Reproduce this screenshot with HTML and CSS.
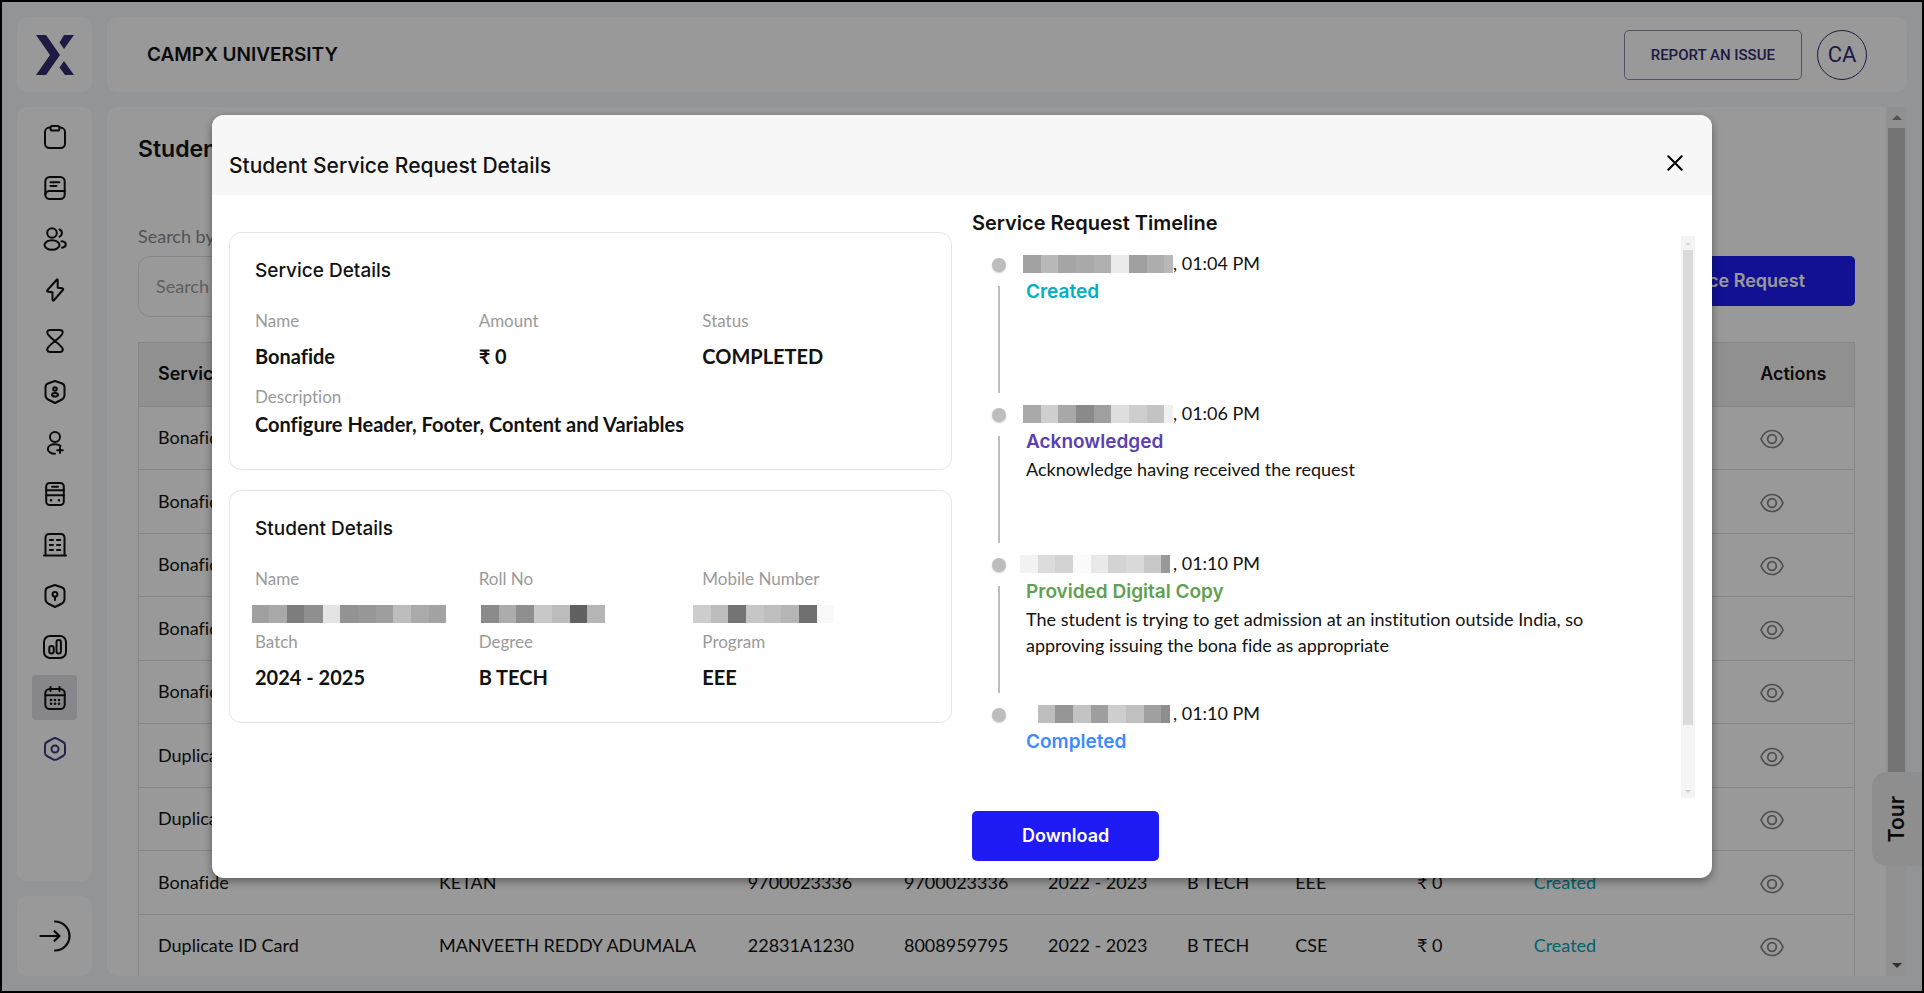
FILE: index.html
```html
<!DOCTYPE html>
<html lang="en">
<head>
<meta charset="utf-8">
<title>CampX University</title>
<link rel="stylesheet" href="styles.css">
</head>
<body>
<svg class="defs" aria-hidden="true">
  <symbol id="eye" viewBox="0 0 24 20"><path d="M1 10C3.200 4.500 7.200 1.500 12 1.500S20.800 4.500 23 10C20.800 15.500 16.800 18.500 12 18.500S3.200 15.500 1 10Z"/><circle cx="12" cy="10" r="4.300"/></symbol>
</svg>
<div class="app">
  <aside class="rail">
    <a class="card logo" href="#" aria-label="CampX home">
      <svg viewBox="0 0 38 40"><path d="M0 0H10L24 20L10 40H0L14 20ZM28 0H38L28 14L23.500 7.500ZM28 26L38 40H29L23.500 32.500Z"/></svg>
    </a>
    <nav class="card nav" aria-label="Main">
      <a href="#" aria-label="Admissions"><svg viewBox="0 0 24 24"><path d="M7.500 2.600H6.500A4.500 4.500 0 0 0 2 7V18.500A4.500 4.500 0 0 0 6.500 23H17.500A4.500 4.500 0 0 0 22 18.500V7A4.500 4.500 0 0 0 17.500 2.600H16.500"/><rect x="7.500" y="1" width="9" height="4.500" rx="1.800"/></svg></a>
      <a href="#" aria-label="Courses"><svg viewBox="0 0 24 24"><rect x="2.300" y="1" width="19.400" height="22" rx="4.500"/><path d="M2.300 18.500A4 4 0 0 1 6 15H21.700M7.500 6.300H16.500M7.500 10H13.500"/></svg></a>
      <a href="#" aria-label="People"><svg viewBox="0 0 24 24"><circle cx="9" cy="6" r="4.800"/><ellipse cx="9" cy="18" rx="7.500" ry="4.800"/><path d="M16.500 2.500A3.900 3.900 0 0 1 16.500 9.700M18.500 14.300C21 14.600 22.800 15.900 22.800 17.500S21 20.300 19 20.800"/></svg></a>
      <a href="#" aria-label="Activity"><svg viewBox="0 0 24 24"><path d="M14 1.500L4.500 12Q3.500 13.500 5 13.700L9.500 14.200V21.500Q9.700 23.500 11.200 22L19.800 12Q20.800 10.500 19.200 10.200L14.700 9.700V2.500Q14.700 .8 14 1.500Z"/></svg></a>
      <a href="#" aria-label="Schedule"><svg viewBox="0 0 24 24"><path d="M7 1H17C20 1 20.500 3.800 18.700 5.800Q16 9 12 12Q8 9 5.300 5.800C3.500 3.800 4 1 7 1ZM7 23H17C20 23 20.500 20.200 18.700 18.200Q16 15 12 12Q8 15 5.300 18.200C3.500 20.200 4 23 7 23Z"/></svg></a>
      <a href="#" aria-label="Staff"><svg viewBox="0 0 24 24"><path d="M12 1L18.500 3.200Q21.500 4.200 21.500 7V15Q21.500 18 19 19.500L12 23L5 19.500Q2.500 18 2.500 15V7Q2.500 4.200 5.500 3.200Z"/><circle cx="12" cy="9" r="1.800"/><ellipse cx="12" cy="14.800" rx="3" ry="1.800"/></svg></a>
      <a href="#" aria-label="Enrolment"><svg viewBox="0 0 24 24"><circle cx="12" cy="6" r="5"/><path d="M17.500 14.800C16 13.800 14 13.300 12 13.300C8 13.300 4.800 15.200 4.800 18S8 22.800 12 22.800M17 16.500V22M14.200 19.300H19.800"/></svg></a>
      <a href="#" aria-label="Transport"><svg viewBox="0 0 24 24"><rect x="3.200" y="1" width="17.600" height="22" rx="3.500"/><path d="M3.200 8.300H20.800M3.200 13.300H20.800M9 4.700H15"/><path class="dots" d="M8 18.200H8.010M16 18.200H16.010"/></svg></a>
      <a href="#" aria-label="Campus"><svg viewBox="0 0 24 24"><path d="M2.500 22.500V4.500A3.500 3.500 0 0 1 6 1H18A3.500 3.500 0 0 1 21.500 4.500V22.500M1 22.500H23M6.800 7H10M14 7H17.200M6.800 12H10M14 12H17.200M6.800 17H10M14 17H17.200"/></svg></a>
      <a href="#" aria-label="Security"><svg viewBox="0 0 24 24"><path d="M12 1L18.500 3.200Q21.500 4.200 21.500 7V15Q21.500 18 19 19.500L12 23L5 19.500Q2.500 18 2.500 15V7Q2.500 4.200 5.500 3.200Z"/><circle cx="12" cy="10.300" r="2.400"/><path d="M12 12.700V16"/></svg></a>
      <a href="#" aria-label="Reports"><svg viewBox="0 0 24 24"><rect x="1" y="1" width="22" height="22" rx="6"/><rect x="6.300" y="11" width="4.400" height="7.500" rx="2"/><rect x="13.500" y="5" width="4.400" height="13.500" rx="2"/></svg></a>
      <a class="active" href="#" aria-label="Service requests"><svg viewBox="0 0 24 24"><rect x="2.300" y="3" width="19.400" height="20" rx="4.500"/><path d="M2.300 9.300H21.700M7.500 1V5M16.500 1V5"/><path class="dots" d="M8 14H8.010M12 14H12.010M16 14H16.010M8 17.700H8.010M12 17.700H12.010M16 17.700H16.010"/></svg></a>
      <a class="accent" href="#" aria-label="Settings"><svg viewBox="0 0 24 24"><path d="M12 1Q12.800 1 14 1.700L20 5Q22 6 22 8V16Q22 18 20 19L14 22.300Q12 23.300 10 22.300L4 19Q2 18 2 16V8Q2 6 4 5L10 1.700Q11.200 1 12 1Z"/><circle cx="12" cy="12" r="3.500"/></svg></a>
    </nav>
    <button class="card logout" type="button" aria-label="Log out">
      <svg viewBox="0 0 32 32"><path d="M16 1.500A14.500 14.500 0 0 1 16 30.500M1.500 16H20M15.500 11.200L20.500 16L15.500 20.800"/></svg>
    </button>
  </aside>

  <div class="main">
    <header class="card topbar">
      <div class="brand">CAMPX UNIVERSITY</div>
      <button class="report" type="button">REPORT AN ISSUE</button>
      <button class="avatar" type="button">CA</button>
    </header>

    <main class="card page">
      <div class="content">
        <h1>Student Service Requests</h1>
        <div class="toolbar">
          <div class="search">
            <label for="q">Search by Name</label>
            <input id="q" type="text" placeholder="Search">
          </div>
          <button class="primary" type="button">Raise Service Request</button>
        </div>
        <table class="requests">
          <colgroup><col class="c-service"><col class="c-name"><col class="c-roll"><col class="c-mobile"><col class="c-batch"><col class="c-degree"><col class="c-program"><col class="c-amount"><col class="c-status"><col></colgroup>
          <thead><tr><th>Service</th><th>Name</th><th>Roll No</th><th>Mobile</th><th>Batch</th><th>Degree</th><th>Program</th><th>Amount</th><th>Status</th><th>Actions</th></tr></thead>
          <tbody>
            <tr><td>Bonafide</td><td></td><td></td><td></td><td></td><td></td><td></td><td></td><td></td><td><a href="#" aria-label="View"><svg class="eye"><use href="#eye"/></svg></a></td></tr>
            <tr><td>Bonafide</td><td></td><td></td><td></td><td></td><td></td><td></td><td></td><td></td><td><a href="#" aria-label="View"><svg class="eye"><use href="#eye"/></svg></a></td></tr>
            <tr><td>Bonafide</td><td></td><td></td><td></td><td></td><td></td><td></td><td></td><td></td><td><a href="#" aria-label="View"><svg class="eye"><use href="#eye"/></svg></a></td></tr>
            <tr><td>Bonafide</td><td></td><td></td><td></td><td></td><td></td><td></td><td></td><td></td><td><a href="#" aria-label="View"><svg class="eye"><use href="#eye"/></svg></a></td></tr>
            <tr><td>Bonafide</td><td></td><td></td><td></td><td></td><td></td><td></td><td></td><td></td><td><a href="#" aria-label="View"><svg class="eye"><use href="#eye"/></svg></a></td></tr>
            <tr><td>Duplicate ID Card</td><td></td><td></td><td></td><td></td><td></td><td></td><td></td><td></td><td><a href="#" aria-label="View"><svg class="eye"><use href="#eye"/></svg></a></td></tr>
            <tr><td>Duplicate ID Card</td><td></td><td></td><td></td><td></td><td></td><td></td><td></td><td></td><td><a href="#" aria-label="View"><svg class="eye"><use href="#eye"/></svg></a></td></tr>
            <tr><td>Bonafide</td><td>KETAN</td><td>9700023336</td><td>9700023336</td><td>2022 - 2023</td><td>B TECH</td><td>EEE</td><td>₹ 0</td><td class="created">Created</td><td><a href="#" aria-label="View"><svg class="eye"><use href="#eye"/></svg></a></td></tr>
            <tr><td>Duplicate ID Card</td><td>MANVEETH REDDY ADUMALA</td><td>22831A1230</td><td>8008959795</td><td>2022 - 2023</td><td>B TECH</td><td>CSE</td><td>₹ 0</td><td class="created">Created</td><td><a href="#" aria-label="View"><svg class="eye"><use href="#eye"/></svg></a></td></tr>
          </tbody>
        </table>
      </div>
      <div class="scrollbar" aria-hidden="true"><span class="up"></span><span class="thumb"></span><span class="down"></span></div>
    </main>
  </div>
  <button class="tour" type="button"><span>Tour</span></button>

  <div class="overlay">
    <section class="modal" role="dialog" aria-modal="true" aria-labelledby="dlg">
      <header class="modal-head">
        <h2 id="dlg">Student Service Request Details</h2>
        <button class="close" type="button" aria-label="Close"><svg viewBox="0 0 16 16"><path d="M1.300 1.300L14.700 14.700M14.700 1.300L1.300 14.700"/></svg></button>
      </header>
      <div class="modal-body">
        <div class="left">
          <section class="panel">
            <h3>Service Details</h3>
            <dl class="fields">
              <div><dt>Name</dt><dd>Bonafide</dd></div>
              <div><dt>Amount</dt><dd>₹ 0</dd></div>
              <div><dt>Status</dt><dd>COMPLETED</dd></div>
              <div class="wide"><dt>Description</dt><dd>Configure Header, Footer, Content and Variables</dd></div>
            </dl>
          </section>
          <section class="panel">
            <h3>Student Details</h3>
            <dl class="fields">
              <div><dt>Name</dt><dd class="hidden-value"><span class="mosaic m-name"></span></dd></div>
              <div><dt>Roll No</dt><dd class="hidden-value"><span class="mosaic m-roll"></span></dd></div>
              <div><dt>Mobile Number</dt><dd class="hidden-value"><span class="mosaic m-mobile"></span></dd></div>
              <div><dt>Batch</dt><dd>2024 - 2025</dd></div>
              <div><dt>Degree</dt><dd>B TECH</dd></div>
              <div><dt>Program</dt><dd>EEE</dd></div>
            </dl>
          </section>
        </div>
        <div class="right">
          <h3>Service Request Timeline</h3>
          <div class="timeline">
            <ol>
              <li><div class="when"><span class="date"><span class="mosaic m-d1"></span></span>, 01:04 PM</div><div class="state s-created">Created</div></li>
              <li><div class="when"><span class="date"><span class="mosaic m-d2"></span></span>, 01:06 PM</div><div class="state s-ack">Acknowledged</div><p>Acknowledge having received the request</p></li>
              <li><div class="when"><span class="date"><span class="mosaic m-d3"></span></span>, 01:10 PM</div><div class="state s-copy">Provided Digital Copy</div><p>The student is trying to get admission at an institution outside India, so approving issuing the bona fide as appropriate</p></li>
              <li><div class="when"><span class="date"><span class="mosaic m-d4"></span></span>, 01:10 PM</div><div class="state s-done">Completed</div></li>
            </ol>
            <div class="scrollbar small" aria-hidden="true"><span class="up"></span><span class="thumb"></span><span class="down"></span></div>
          </div>
          <button class="primary download" type="button">Download</button>
        </div>
      </div>
    </section>
  </div>
</div>
</body>
</html>
```

FILE: styles.css
```css
:root {
  --head: Inter, "Noto Sans", sans-serif;
  --body: Lato, "Open Sans", sans-serif;
  --navy: #332d70;
  --ink: #121212;
}

* { box-sizing: border-box; }

body, h1, h2, h3, p, dl, dd, ol { margin: 0; padding: 0; }

body { font-family: var(--body); font-variant-ligatures: none; color: var(--ink); }

button { font: inherit; border: 0; padding: 0; cursor: pointer; }

svg { display: block; fill: none; stroke: currentColor; stroke-width: 1.7; stroke-linecap: round; stroke-linejoin: round; }

.defs { position: absolute; width: 0; height: 0; }

.app {
  position: relative;
  display: flex;
  gap: 15px;
  height: 100vh;
  padding: 15px;
  border: 2px solid #000;
  background: #f4f7fb;
  overflow: hidden;
}

.card { background: #fff; border-radius: 10px; }

/* Left rail */
.rail { display: flex; flex-direction: column; gap: 15px; width: 75px; flex: none; }
.logo { display: flex; align-items: center; justify-content: center; height: 75px; }
.logo svg { width: 38px; height: 40px; fill: var(--navy); stroke: none; }
.nav { flex: 1; display: flex; flex-direction: column; align-items: center; gap: 6px; padding-top: 7px; }
.nav a { display: flex; align-items: center; justify-content: center; width: 45px; height: 45px; border-radius: 4px; color: #111; }
.nav svg { width: 24px; height: 24px; stroke-width: 2; }
.nav .active { background: #e1dfe8; }
.nav .accent { color: #3f3a80; }
.nav .dots { stroke-width: 2.6; }
.logout { display: flex; align-items: center; justify-content: center; height: 80px; color: #111; }
.logout svg { width: 32px; height: 32px; stroke-width: 2.2; }

/* Header */
.main { flex: 1; min-width: 0; display: flex; flex-direction: column; gap: 15px; }
.topbar { display: flex; align-items: center; gap: 15px; height: 75px; padding: 0 40px; flex: none; }
.brand { flex: 1; font: 600 19px/28px var(--head); }
.report { height: 50px; padding: 0 26px; border: 1px solid #8a87ab; border-radius: 5px; background: none; color: var(--navy); font: 500 15px/24px Roboto, sans-serif; }
.avatar { width: 50px; height: 50px; border: 1px solid var(--navy); border-radius: 50%; background: none; color: var(--navy); font: 400 22px/28px Roboto, sans-serif; }

/* Page */
.page { flex: 1; min-height: 0; display: flex; overflow: hidden; border-radius: 10px 0 0 10px; }
.content { flex: 1; min-width: 0; padding: 28px 31px 0; }
h1 { font: 600 23px/28px var(--head); }
.toolbar { display: flex; align-items: flex-start; justify-content: space-between; margin-top: 60px; margin-bottom: 25px; }
.search { display: flex; flex-direction: column; gap: 6px; width: 400px; }
.search label { font-size: 18px; line-height: 27px; color: #8b8b8b; }
.search input { height: 61px; padding: 0 17px 2px; border: 1px solid #e0e0e0; border-radius: 12px; font: 400 18px/24px var(--body); }
.search input::placeholder { color: #a0a0a0; }
.primary { height: 50px; padding: 0 50px; border-radius: 5px; background: #1f1bf5; color: #fff; font: 600 18px/24px var(--head); }
.toolbar .primary { margin-top: 33px; }

.requests { width: 100%; table-layout: fixed; border-collapse: collapse; border: 1px solid #dfdfdf; font-size: 18px; line-height: 24px; }
.requests th { height: 64px; padding: 0 19px 2px; background: #f0f0f0; font: 600 18px/24px var(--head); text-align: left; }
.requests td { height: 63px; padding: 0 19px 2px; border-top: 1px solid #dfdfdf; white-space: nowrap; }
.requests tr:nth-child(even) td { height: 64px; }
.requests a { display: block; padding-top: 4px; color: #828282; }
.eye { width: 24px; height: 20px; }
.created { color: #00a5b5; }
.c-service { width: 16.4%; }
.c-name { width: 18%; }
.c-roll { width: 9.1%; }
.c-mobile { width: 8.4%; }
.c-batch { width: 8.1%; }
.c-degree { width: 6.3%; }
.c-program { width: 7.1%; }
.c-amount { width: 6.8%; }
.c-status { width: 13.2%; }

/* Drawn scrollbars */
.scrollbar { display: flex; flex-direction: column; align-items: center; flex: none; width: 21px; background: #f1f1f1; }
.scrollbar .up, .scrollbar .down { display: flex; align-items: center; justify-content: center; width: 100%; height: 21px; flex: none; }
.scrollbar .up::before, .scrollbar .down::before { content: ""; border: 5px solid transparent; }
.scrollbar .up::before { border-top: 0; border-bottom-color: #8a8a8a; }
.scrollbar .down::before { border-bottom: 0; border-top-color: #505050; }
.scrollbar .thumb { width: 17px; height: 80%; background: #c1c1c1; }
.scrollbar .down { margin-top: auto; }
.small { width: 14px; background: #f4f4f4; }
.small .up, .small .down { height: 14px; }
.small .up::before, .small .down::before { border-width: 3px; }
.small .up::before { border-top: 0; border-bottom-color: #d8d8d8; }
.small .down::before { border-bottom: 0; border-top-color: #d0d0d0; }
.small .thumb { width: 10px; height: 475px; background: #dadada; }

.tour { position: absolute; right: 0; top: 770px; display: flex; align-items: center; justify-content: center; width: 50px; height: 94px; border-radius: 15px 0 0 15px; background: #ededed; color: var(--ink); }
.tour span { writing-mode: vertical-rl; transform: rotate(180deg); font: 600 21px/24px var(--head); }

/* Dialog */
.overlay { position: absolute; inset: 0; display: flex; align-items: center; justify-content: center; background: rgba(0, 0, 0, 0.4); }
.modal { width: 90%; max-width: 1500px; border-radius: 12px; background: #fff; overflow: hidden; box-shadow: 0 3px 8px rgba(0, 0, 0, 0.4); }
.modal-head { display: flex; align-items: flex-end; justify-content: space-between; height: 80px; padding: 0 28px 15px 17px; background: #f7f7f7; }
h2 { font: 500 21px/28px var(--head); }
.close { display: flex; align-items: center; justify-content: center; width: 18px; height: 34px; background: none; color: #000; }
.close svg { width: 16px; height: 16px; stroke-width: 2; }
.modal-body { display: flex; gap: 20px; padding: 15px 17px 17px 17px; }
.left { flex: 1; min-width: 0; display: flex; flex-direction: column; gap: 20px; padding-top: 22px; }
.right { flex: 1; min-width: 0; }
h3 { font: 500 19px/24px var(--head); }
.right h3 { font-weight: 600; font-size: 20px; line-height: 26px; }
.panel { padding: 26px 25px 31px; border: 1px solid #e6e6e6; border-radius: 12px; }
.fields { display: grid; grid-template-columns: repeat(3, 1fr); margin-top: 28px; }
dt { font-size: 17px; line-height: 20px; color: #9a9a9a; }
dd { margin-top: 11px; font-size: 20px; line-height: 28px; font-weight: 700; }
.fields .wide { grid-column: 1 / -1; margin-top: 17px; }
.wide dd { margin-top: 3px; }
.hidden-value { height: 32px; padding-top: 5px; }

.mosaic { display: block; flex: none; height: 18px; }
.m-name { width: 194px; margin-left: -3px; background: linear-gradient(90deg, #a0a0a0 9%, #a9a9a9 0 18%, #7d7d7d 0 27%, #8f8f8f 0 36.400%, #e4e4e4 0 45.300%, #939393 0 54.500%, #989898 0 64%, #9e9e9e 0 72.700%, #bdbdbd 0 82%, #aaa 0 91%, #a3a3a3 0); }
.m-roll { width: 124px; margin-left: 2px; background: linear-gradient(90deg, #8b8b8b 14.300%, #acacac 0 28.600%, #8f8f8f 0 42.800%, #c8c8c8 0 57.500%, #bcbcbc 0 72%, #616161 0 85.600%, #b5b5b5 0); }
.m-mobile { width: 141px; margin-left: -9px; background: linear-gradient(90deg, #cdcdcd 12.500%, #bdbdbd 0 25%, #747474 0 37.500%, #c6c6c6 0 50%, #bfbfbf 0 62.500%, #b5b5b5 0 75%, #6f6f6f 0 88%, #f9f9f9 0); }
.m-d1 { width: 150px; margin-left: -3px; background: linear-gradient(90deg, #a2a2a2 12%, #b9b9b9 0 23.300%, #a5a5a5 0 35.300%, #a9a9a9 0 47.300%, #b0b0b0 0 58.700%, #ececec 0 70.700%, #a0a0a0 0 82.700%, #aeaeae 0 94%, #b8b8b8 0); }
.m-d2 { width: 150px; margin-left: -3px; background: linear-gradient(90deg, #a9a9a9 12%, #cfcfcf 0 23.300%, #a8a8a8 0 35.300%, #8a8a8a 0 47.300%, #9f9f9f 0 58.700%, #dedede 0 70.700%, #cecece 0 82.700%, #c3c3c3 0 94%, #f0f0f0 0); }
.m-d3 { width: 150px; margin-left: -6px; background: linear-gradient(90deg, #f2f2f2 12%, #dcdcdc 0 23.300%, #d2d2d2 0 35.300%, #fafafa 0 47.300%, #e9e9e9 0 58.700%, #d3d3d3 0 70.700%, #d9d9d9 0 82.700%, #c8c8c8 0 94%, #989898 0); }
.m-d4 { width: 132px; margin-left: 12px; background: linear-gradient(90deg, #bebebe 13%, #969696 0 26.500%, #c3c3c3 0 40%, #9e9e9e 0 53%, #cecece 0 66.500%, #c0c0c0 0 80.500%, #a0a0a0 0 93.500%, #8e8e8e 0); }

.timeline { display: flex; height: 562px; overflow: hidden; }
.timeline ol { flex: 1; min-width: 0; padding-top: 14px; list-style: none; }
.timeline li { position: relative; height: 150px; padding-left: 54px; padding-right: 60px; }
.timeline li::before { content: ""; position: absolute; left: 20px; top: 8px; width: 14px; height: 14px; border-radius: 50%; background: #bdbdbd; box-shadow: 0 1px 2px rgba(0, 0, 0, 0.2); }
.timeline li:not(:last-child)::after { content: ""; position: absolute; left: 26px; top: 36px; width: 2px; height: 107px; background: #bdbdbd; }
.when { display: flex; align-items: center; font-size: 18px; line-height: 27px; }
.date { width: 147px; flex: none; }
.state { font: 600 19px/29px var(--head); }
.timeline p { font-size: 18px; line-height: 26px; }
.s-created { color: #00b0c3; }
.s-ack { color: #5b3fb0; }
.s-copy { color: #5fa052; }
.s-done { color: #3d8bff; }
.download { margin-top: 13px; }
```
